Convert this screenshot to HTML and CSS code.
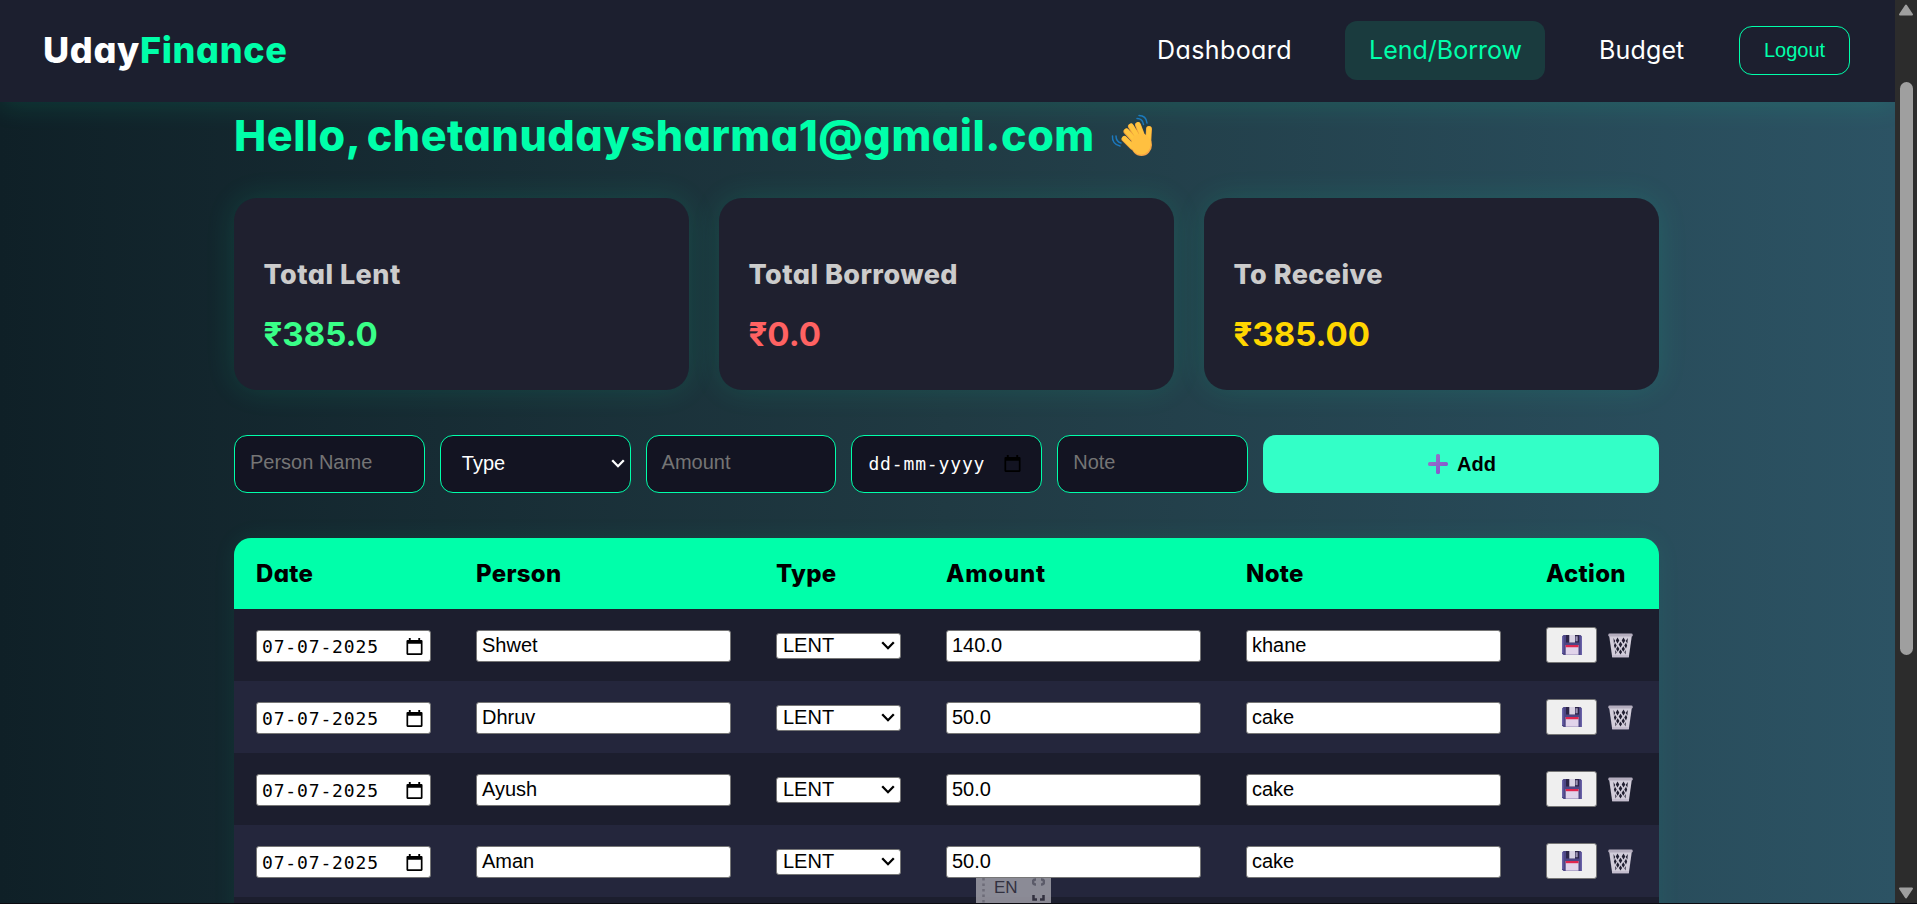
FILE: index.html
```html
<!DOCTYPE html>
<html lang="en">
<head>
<meta charset="utf-8">
<title>UdayFinance - Lend/Borrow</title>
<link rel="stylesheet" href="styles.css">
</head>
<body>
<svg width="0" height="0" class="defs" aria-hidden="true">
  <defs>
    <linearGradient id="plus" x1="0" y1="0" x2="1" y2="1"><stop offset="0" stop-color="#9b7bc4"/><stop offset="1" stop-color="#7f4fd0"/></linearGradient>
    <symbol id="i-cal" viewBox="0 0 18 20"><path fill="currentColor" fill-rule="evenodd" d="M3 1h2v2h8V1h2v2h1.300a1.200 1.200 0 0 1 1.200 1.200v13.600a1.200 1.200 0 0 1-1.200 1.200H1.700A1.200 1.200 0 0 1 .5 17.800V4.200A1.200 1.200 0 0 1 1.700 3H3zM2.300 7v10.200h13.400V7z"/></symbol>
    <symbol id="i-down" viewBox="0 0 14 9"><path d="M1.200 1.300 7 7.200l5.800-5.900" fill="none" stroke="currentColor" stroke-width="2.300"/></symbol>
    <symbol id="i-save" viewBox="0 0 20 20">
      <path fill="#4d4685" d="M1.500 0h17L20 1.500V20H1.500L0 18.500v-17z"/>
      <path fill="#6a62a8" d="M0 1.500h1.500V18H0zM18.500 1.500H20V20h-1.500z"/>
      <path fill="#2c2548" d="M4 0h13v7.500H4z"/><path fill="#d9d3e4" d="M7.300 0h5.700v7.500H7.300z"/><path fill="#9d94b5" d="M13.500 1.200h2.200v5h-2.200z"/>
      <path fill="#e0d3ea" d="M3.700 10h12.800v9.700H3.700z"/><path fill="#e0264f" d="M3.700 10h12.800v2.200H3.700z"/>
    </symbol>
    <symbol id="i-trash" viewBox="0 0 25 25">
      <path fill="#d2cdda" d="M1.200 3h22.600l-3 21.200H4.200z"/>
      <path fill="#211f31" d="M5.500 5l1.700 3-1.300 2.500zM9.500 4.500l1.800 2.900-1.800 3L7.800 7.500zM15.500 4.500l1.800 3-1.800 2.900-1.800-3zM19.800 5l-.4 5.500-1.700-2.500zM7 9.800l1.700 2.700L7 15.400l-1.100-2.900zM12.500 8.700l1.800 2.900-1.800 3-1.800-3zM18 9.800l1.200 2.700-1.200 2.900-1.700-2.900zM9.700 13.200l1.700 2.800-1.700 2.800L8.100 16zM15.300 13.200l1.600 2.800-1.600 2.800-1.700-2.800zM7.200 17l1.400 2.200-1.100 2.200zM12.500 16.400l1.600 2.600-1.600 2.500-1.600-2.500zM17.800 17l-.3 4.400-1.100-2.200z"/>
      <rect x=".3" y=".5" width="24.400" height="3" rx="1.300" fill="#b4adbe"/><path d="M4.200 22h16.600v2.200H4.200z" fill="#c4bdce"/>
    </symbol>
  </defs>
</svg>
<div class="window">
  <div class="page">
    <nav class="navbar">
      <div class="logo">Uday<span>Finance</span></div>
      <div class="links">
        <a class="link dash">Dashboard</a>
        <a class="link active">Lend/Borrow</a>
        <a class="link budget">Budget</a>
        <a class="logout">Logout</a>
      </div>
    </nav>
    <main class="container">
      <h1><span>Hello, chetanudaysharma1@gmail.com</span>
        <svg class="wave" viewBox="0 0 42 42" fill="none" stroke-linecap="round">
          <path stroke="#1c78bd" stroke-width="1.500" d="M28 1.500c4.500 0 7.500 3 8 7.500M26 4.500c3.500 0 6 2.500 6.500 6M1.500 22c-.5 5 2.500 9 7.500 10M5 22c0 3.500 1.500 6 5 7"/>
          <path stroke="#eea03c" stroke-width="6" d="M13.500 25l8 8M15.500 17.500l10 11M20 12.500l8 13M27 11l5 13M38 15l-1 17"/>
          <ellipse cx="30.500" cy="31" rx="10.500" ry="11" fill="#f5a445"/>
          <path stroke="#ffc53f" stroke-width="4.700" d="M13.300 24.500l8 8M15.500 17l10 11M20 12l8 13M27 10.500l5 13M38 14.500l-1 16"/>
          <ellipse cx="30" cy="30" rx="9.800" ry="10.600" fill="#ffc040"/>
        </svg>
      </h1>
      <section class="cards">
        <div class="card"><h3>Total Lent</h3><p class="green">₹385.0</p></div>
        <div class="card"><h3>Total Borrowed</h3><p class="red">₹0.0</p></div>
        <div class="card"><h3>To Receive</h3><p class="gold">₹385.00</p></div>
      </section>
      <form class="form">
        <div class="field hint">Person Name</div>
        <div class="field pick">Type<svg class="down"><use href="#i-down"/></svg></div>
        <div class="field hint">Amount</div>
        <div class="field date"><span>dd-mm-yyyy</span><svg class="cal"><use href="#i-cal"/></svg></div>
        <div class="field hint">Note</div>
        <div class="add">
          <svg class="plus" viewBox="0 0 20 20"><path fill="url(#plus)" d="M8 1.500C8 .5 9 0 10 0s2 .5 2 1.500V8h6.500c1 0 1.500 1 1.500 2s-.5 2-1.500 2H12v6.500c0 1-1 1.500-2 1.500s-2-.5-2-1.500V12H1.500C.5 12 0 11 0 10s.5-2 1.500-2H8z"/></svg>
          <span>Add</span>
        </div>
      </form>
      <div class="table">
        <div class="row head">
          <div>Date</div><div>Person</div><div>Type</div><div class="wide">Amount</div><div>Note</div><div>Action</div>
        </div>
        <div class="row">
          <div class="input date"><span>07-07-2025</span><svg class="cal"><use href="#i-cal"/></svg></div>
          <div class="input">Shwet</div>
          <div class="input select">LENT<svg class="down"><use href="#i-down"/></svg></div>
          <div class="input">140.0</div><div class="input">khane</div>
          <div class="actions"><div class="save"><svg><use href="#i-save"/></svg></div><svg class="trash"><use href="#i-trash"/></svg></div>
        </div>
        <div class="row even">
          <div class="input date"><span>07-07-2025</span><svg class="cal"><use href="#i-cal"/></svg></div>
          <div class="input">Dhruv</div>
          <div class="input select">LENT<svg class="down"><use href="#i-down"/></svg></div>
          <div class="input">50.0</div><div class="input">cake</div>
          <div class="actions"><div class="save"><svg><use href="#i-save"/></svg></div><svg class="trash"><use href="#i-trash"/></svg></div>
        </div>
        <div class="row">
          <div class="input date"><span>07-07-2025</span><svg class="cal"><use href="#i-cal"/></svg></div>
          <div class="input">Ayush</div>
          <div class="input select">LENT<svg class="down"><use href="#i-down"/></svg></div>
          <div class="input">50.0</div><div class="input">cake</div>
          <div class="actions"><div class="save"><svg><use href="#i-save"/></svg></div><svg class="trash"><use href="#i-trash"/></svg></div>
        </div>
        <div class="row even">
          <div class="input date"><span>07-07-2025</span><svg class="cal"><use href="#i-cal"/></svg></div>
          <div class="input">Aman</div>
          <div class="input select">LENT<svg class="down"><use href="#i-down"/></svg></div>
          <div class="input">50.0</div><div class="input">cake</div>
          <div class="actions"><div class="save"><svg><use href="#i-save"/></svg></div><svg class="trash"><use href="#i-trash"/></svg></div>
        </div>
        <div class="row last"></div>
      </div>
    </main>
  </div>
  <div class="scrollbar">
    <svg class="arrow" viewBox="0 0 16 12"><path d="M8 1.500 14 10.500H2z" fill="#9f9f9f" stroke="#9f9f9f" stroke-width="2" stroke-linejoin="round"/></svg>
    <div class="track"><div class="thumb"></div></div>
    <svg class="arrow" viewBox="0 0 16 12"><path d="M8 10.500 14 1.500H2z" fill="#9f9f9f" stroke="#9f9f9f" stroke-width="2" stroke-linejoin="round"/></svg>
  </div>
  <div class="ime">
    <svg class="grip" viewBox="0 0 3 26"><path d="M1.500 0v26" stroke="#6d6c78" stroke-width="2.500" stroke-dasharray="2.500 3"/></svg>
    <span>EN</span>
    <svg class="keys" viewBox="0 0 13 24" fill="none" stroke-width="2.500"><path stroke="#5b5b69" d="M4 1.500H3.500a2.300 2.300 0 0 0 0 5H4M9 1.500h.5a2.300 2.300 0 0 1 0 5H9"/><path stroke="#32313f" d="M1.500 17v4.500H5M11.500 17v4.500H8"/></svg>
  </div>
</div>
</body>
</html>
```

FILE: styles.css
```css
* { box-sizing: border-box; margin: 0; padding: 0; }
body { width: 1917px; height: 904px; overflow: hidden; background: #0b0b10; font-family: "Liberation Sans", Arial, sans-serif; }
.defs { position: absolute; }
.window { position: relative; display: flex; height: 903px; overflow: hidden; }
.page { width: 1895px; height: 903px; overflow: hidden; background: linear-gradient(to right, #0f2027, #203a43, #2c5364); }

.navbar, h1, h3, .card p, .head { font-family: Inter, "Noto Sans", sans-serif; font-feature-settings: "cv11" 1; white-space: nowrap; }

.navbar { position: relative; display: flex; justify-content: space-between; align-items: center; height: 102px; padding: 0 45px 1px 43px; background: #1c1f2f; box-shadow: 0 4px 25px rgba(0, 255, 170, .12); }
.logo { padding-bottom: 1px; font-size: 36px; font-weight: 800; letter-spacing: .65px; color: #fff; }
.logo span { color: #00ffaa; }
.links { display: flex; align-items: center; }
.link { color: #fff; font-size: 25px; line-height: 58px; height: 59px; }
.dash { width: 188px; letter-spacing: .4px; }
.active { width: 200px; padding-left: 24px; border-radius: 12px; background: #1a3b3e; color: #00ffaa; }
.budget { width: 140px; margin-left: 54px; letter-spacing: .15px; }
.logout { width: 111px; height: 49px; border: 1px solid #00ffaa; border-radius: 13px; color: #00ffaa; font: 20px/46px "Liberation Sans", Arial, sans-serif; text-align: center; }

.container { width: 1425px; margin-left: 234px; }
h1 { display: flex; align-items: center; gap: 16px; height: 68px; padding-bottom: 2px; color: #00ffaa; font-size: 43px; font-weight: 800; letter-spacing: .56px; word-spacing: -3px; }
.wave { width: 42px; height: 42px; flex: none; }
.cards { display: grid; grid-template-columns: repeat(3, 455px); gap: 30px; margin-top: 28px; }
.card { height: 192px; padding: 57px 30px 0 29.5px; border-radius: 23px; background: #1f202f; box-shadow: 0 0 30px rgba(0, 255, 170, .12); }
.card h3 { height: 40px; line-height: 40px; font-size: 27px; font-weight: 800; letter-spacing: .45px; color: #ccc; }
.card p { margin-top: 14px; height: 50px; line-height: 50px; font-size: 33px; font-weight: 700; }
.card .green { color: #39ff88; }
.card .red { color: #ff6262; }
.card .gold { color: #ffd600; }

.form { display: grid; grid-template-columns: repeat(5, 190.8px) 1fr; gap: 15px; margin-top: 45px; }
.field { display: flex; align-items: center; justify-content: space-between; height: 58px; padding: 0 15px 3px; border: 1px solid #00ffaa; border-radius: 13px; background: #131422; color: #fff; font-size: 20px; }
.hint { color: #757575; }
.pick { padding: 0 5px 1px 21px; }
.down { width: 14px; height: 9px; }
.field.date { padding: 0 20px 1px 16px; }
.date span { font-family: "DejaVu Sans Mono", monospace; font-size: 18px; letter-spacing: .85px; }
.cal { width: 17px; height: 19px; color: #000; }
.add { display: flex; align-items: center; justify-content: center; gap: 9px; padding-left: 2px; border-radius: 13px; background: #33ffc7; color: #000; font-size: 20px; font-weight: 700; }
.plus { width: 20px; height: 20px; }

.table { margin-top: 45px; border-radius: 17px 17px 0 0; overflow: hidden; box-shadow: 0 0 25px rgba(0, 255, 170, .07); }
.row { display: grid; grid-template-columns: 175px 255px 125px 255px 255px 91px; column-gap: 45px; align-items: center; height: 72px; padding: 0 22px; background: #1c1e2e; }
.even { background: #24263c; }
.head { height: 71px; padding-bottom: 1px; background: #00ffaa; color: #000; font-size: 24px; font-weight: 800; letter-spacing: .3px; }
.wide { letter-spacing: .8px; }
.input { display: flex; align-items: center; height: 32px; margin-top: 2px; padding: 0 0 2px 5px; border: 1px solid #767676; border-radius: 3px; background: #fff; color: #000; font-size: 20px; }
.input.date { justify-content: space-between; padding: 0 7px 0 5px; }
.select { justify-content: space-between; height: 26px; padding: 0 5px 2px 6px; }
.actions { display: flex; align-items: center; gap: 11px; }
.save { display: flex; align-items: center; justify-content: center; width: 51px; height: 36px; border: 1px solid #767676; border-radius: 3px; background: #efefef; }
.save svg { width: 20px; height: 20px; }
.trash { width: 25px; height: 25px; }

.scrollbar { display: flex; flex-direction: column; align-items: center; width: 22px; padding: 4px 0; background: #2c2c2c; }
.arrow { width: 16px; height: 12px; flex: none; }
.track { flex: 1; padding-top: 66px; }
.thumb { width: 13px; height: 573px; border-radius: 7px; background: #9f9f9f; }

/* Language bar floating above the page */
.ime { position: absolute; left: 976px; top: 878px; display: flex; gap: 9px; width: 75px; height: 25px; padding-left: 6px; background: rgba(160, 158, 168, .84); color: #32313f; font-size: 17px; line-height: 20px; }
.ime span { width: 24px; }
.grip { width: 3px; height: 26px; }
.keys { width: 13px; height: 24px; margin-left: 5px; }
```
